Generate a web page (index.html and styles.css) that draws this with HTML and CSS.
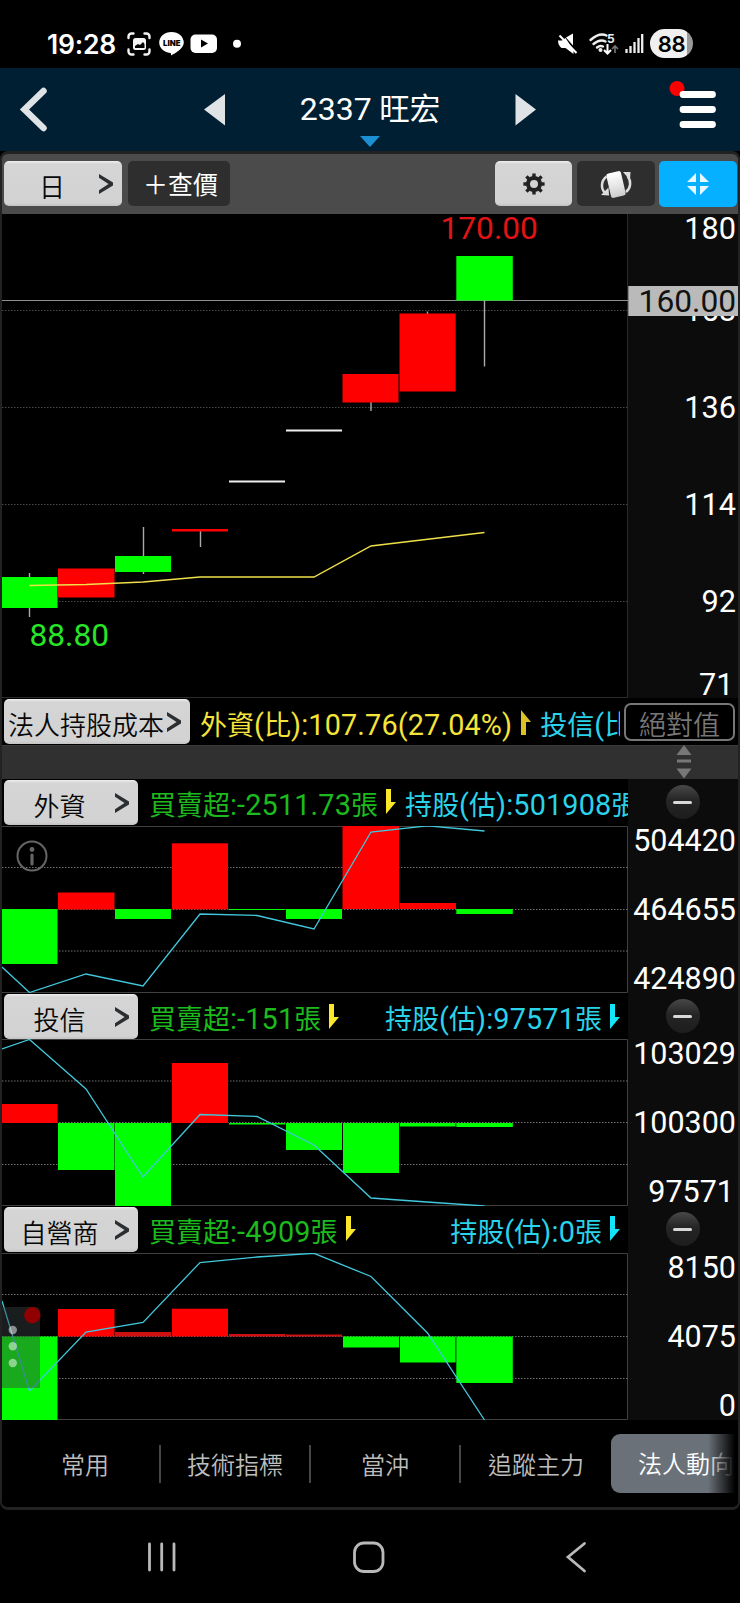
FILE: index.html
```html
<!DOCTYPE html>
<html lang="zh-Hant">
<head>
<meta charset="utf-8">
<title>2337 旺宏</title>
<link rel="stylesheet" href="styles.css">
</head>
<body>
<div class="phone">
  <div class="status">
    <span class="clock">19:28</span>
    <svg class="status-left" width="120" height="28" viewBox="126 30 120 28">
      <g fill="none" stroke="#f4f4f4" stroke-width="2.4" stroke-linecap="round">
        <path d="M128.500 38v-1.500a3 3 0 0 1 3-3h2M144.500 33.500h2a3 3 0 0 1 3 3v1.500M128.500 49.500v2a3 3 0 0 0 3 3h2M144.500 54.500h2a3 3 0 0 0 3-3v-2"/>
      </g>
      <rect x="133" y="38" width="13" height="12" rx="2.500" fill="#f4f4f4"/>
      <path d="M135 48v-2l3-2 2 1 3-3 1.500 2v4z" fill="#000"/>
      <path d="M171.500 32c-7 0-12.300 4.600-12.300 10.600 0 5.400 4.600 9.600 11 10.400 1 .2.900 1 .8 2.400 4-1.800 12.800-6.600 12.800-12.800 0-6-5.300-10.600-12.300-10.600z" fill="#fff"/>
      <text class="line-text" x="163" y="45.600" textLength="17.500" lengthAdjust="spacingAndGlyphs">LINE</text>
      <rect x="190.500" y="34.500" width="26.500" height="18.500" rx="5" fill="#fff"/>
      <path d="M201 39.500v8l7-4z" fill="#000"/>
      <circle cx="237" cy="43.800" r="4" fill="#fff"/>
    </svg>
    <svg class="status-right" width="92" height="30" viewBox="553 29 92 30">
      <path d="M556 40.500h4l3.500-2.500 8 12v4l-8-6h-4q-3.500-3-3.500-7.500zM564 37.500l7-4v12z" fill="#fff"/>
      <path d="M557.500 35.500l17 17.500" stroke="#fff" stroke-width="2"/>
      <g fill="none" stroke="#eee" stroke-width="2.400" stroke-linecap="round">
        <path d="M588.500 40q9-8 16-4.500M591.500 44q6.500-5.500 12-2.500M595 47.500q3-2.500 6-1"/>
      </g>
      <circle cx="598.500" cy="50" r="2" fill="#eee"/>
      <text class="wifi-num" x="605" y="43">5</text>
      <path d="M605.500 44v9M602 50l3.500 3.500 3.500-3.500" fill="none" stroke="#fff" stroke-width="2"/>
      <path d="M613 53v-7M610 49l3-3 3 3" fill="none" stroke="#777" stroke-width="1.600"/>
      <path d="M624.500 53v-4M628.500 53v-7M632.500 53v-11M636.500 53v-15M640.200 53v-19" stroke="#eee" stroke-width="2.300"/>
    </svg>
    <span class="battery">88</span>
  </div>

  <header class="header">
    <svg width="190" height="83" viewBox="0 68 190 83"><path d="M43.500 91L24.500 109.500L43.500 128" fill="none" stroke="#dfe3e6" stroke-width="6.500" stroke-linecap="round"/></svg>
    <svg width="50" height="83" viewBox="190 68 50 83"><path d="M204 109.500L225 94v31.500z" fill="#dfe3e6"/></svg>
    <div class="title"><h1><span class="num">2337</span> 旺宏</h1>
      <svg class="title-mark" width="20" height="11" viewBox="0 0 20 11"><path d="M0 0h20L10 11z" fill="#1b8fd2"/></svg>
    </div>
    <svg width="50" height="83" viewBox="500 68 50 83"><path d="M536 109.500L515.500 94v31.500z" fill="#dfe3e6"/></svg>
    <svg width="190" height="83" viewBox="550 68 190 83"><circle cx="677" cy="88.500" r="7.500" fill="#f00"/><path d="M683 94.500h29.500M683 109.500h29.500M683 124.500h29.500" stroke="#fff" stroke-width="6.800" stroke-linecap="round"/></svg>
  </header>

  <main class="frame">
    <div class="toolbar">
      <button class="btn period"><span>日</span><svg class="chev" width="14" height="20" viewBox="0 0 14 20"><path d="M0 0L14 8.500V11.500L0 20V16.300L9.500 10L0 3.700Z"/></svg></button>
      <button class="btn dark check">＋查價</button>
      <span class="space"></span>
      <button class="btn gear"><svg width="22" height="22" viewBox="-11 -11 22 22"><circle r="6" fill="none" stroke="#222" stroke-width="4"/><path d="M0-7v-3.600M0 7v3.600M7 0h3.600M-7 0h-3.600M5 5l2.600 2.600M-5-5l-2.600-2.600M5-5l2.600-2.600M-5 5l-2.600 2.600" stroke="#222" stroke-width="3.400"/></svg></button>
      <button class="btn dark rotate"><svg width="32" height="30" viewBox="599 168 32 30">
        <defs><linearGradient id="card" x1="0" y1="0" x2="0" y2="1"><stop offset="0" stop-color="#fff"/><stop offset=".5" stop-color="#e8e8e8"/><stop offset="1" stop-color="#ccc"/></linearGradient></defs>
        <rect x="607.500" y="171" width="15" height="25" rx="2.500" transform="rotate(-13 615 183.500)" fill="url(#card)"/>
        <path d="M605.500 175.500C600 180 599.500 187 604 192" fill="none" stroke="#ddd" stroke-width="2.500"/><path d="M600 194l7.500-7.500 .5 8z" fill="#ddd"/>
        <path d="M625 191c5-4 5.500-11 1.500-16" fill="none" stroke="#ddd" stroke-width="2.500"/><path d="M622 171l7.500 0-.5 8z" fill="#ddd"/></svg></button>
      <button class="btn blue"><svg width="22" height="22" viewBox="0 0 22 22"><path d="M9 0v9H0zM13 0v9h9zM9 22v-9H0zM13 22v-9h9z" fill="#e9f7ff"/></svg></button>
    </div>

    <section class="price">
      <svg width="736" height="484" viewBox="2 214 736 484">
        <rect x="628" y="214" width="110" height="484" fill="#0c0c0c"/>
        <path class="axis" d="M627.500 214v484M2 697.500h626"/>
        <path class="grid faint" d="M2 310.500h626M2 407.500h626M2 504.500h626M2 601.500h626"/>
        <path d="M2 300.500h626" stroke="#8f8f8f"/>
        <path class="wick" d="M29.500 573v44M143.500 527v47M200.500 530v17M371 402v9M427.500 311.500v4M484.500 300v66.500"/>
        <g class="up"><rect x="58" y="568.500" width="56.500" height="29"/><rect x="172" y="529" width="56" height="2.500"/><rect x="342.500" y="374" width="56" height="28.500"/><rect x="399.500" y="313.500" width="56.200" height="78"/></g>
        <g class="down"><rect x="2" y="577" width="55.500" height="31"/><rect x="115" y="556" width="56" height="16"/><rect x="456.300" y="256" width="56.500" height="44.500"/></g>
        <path d="M229 481.500h56M286 430.500h56" stroke="#eee" stroke-width="2"/>
        <path d="M29.500 585.500L86 584.500L143 582L200 577H314L371 546L484.500 532.500" fill="none" stroke="#efe04a" stroke-width="1.400"/>
        <text class="high" x="440.500" y="239">170.00</text>
        <text class="low" x="29.500" y="645.500">88.80</text>
        <g class="scale">
          <text x="736" y="239">180</text><text x="736" y="321">158</text><text x="736" y="418">136</text><text x="736" y="515">114</text><text x="736" y="612">92</text><text x="733.500" y="695">71</text>
        </g>
        <rect x="628.300" y="286" width="110" height="30" fill="#bababa"/>
        <text class="now" x="736" y="311.500">160.00</text>
      </svg>
    </section>

    <div class="cost">
      <button class="btn long"><span>法人持股成本</span><svg class="chev" width="14" height="20" viewBox="0 0 14 20"><path d="M0 0L14 8.500V11.500L0 20V16.300L9.500 10L0 3.700Z"/></svg></button>
      <div class="cost-text"><span class="yellow"><i>外資</i>(<i>比</i>):107.76(27.04%)</span><svg class="arrow" width="10" height="25" viewBox="0 0 10 25"><path d="M0 0L10 12H5V25H0Z" fill="#dcc126"/></svg><span class="cyan"><i>投信</i>(<i>比</i>)</span></div>
      <button class="absolute-btn">絕對值</button>
    </div>
    <div class="divider"><svg width="16" height="34" viewBox="0 0 16 34"><path d="M.5 10L8 0l7.500 10zM.5 23.500L8 33.500l7.500-10zM1 14.500h14v3H1z" fill="#777"/></svg></div>

    <section class="panel">
      <div class="panel-main">
        <div class="panel-head">
          <button class="btn"><span>外資</span><svg class="chev" width="14" height="20" viewBox="0 0 14 20"><path d="M0 0L14 8.500V11.500L0 20V16.300L9.500 10L0 3.700Z"/></svg></button>
          <div class="green"><i>買賣超</i>:-2511.73<i>張</i></div>
          <svg class="arrow" width="10" height="25" viewBox="0 0 10 25"><path d="M0 0H5V13H10L0 25Z" fill="#fbe82a"/></svg>
          <div class="cyan cut"><i>持股</i>(<i>估</i>):501908<i>張</i></div>
        </div>
        <svg class="plot" width="626" height="167" viewBox="2 826 626 167">
          <path class="axis" d="M2 826.500H627.500V992.500H2"/>
          <path class="grid" d="M2 867.500h626M2 909.500h626M2 951h626"/>
          <g class="up"><rect x="58" y="892.500" width="56.500" height="17"/><rect x="172" y="843.300" width="56" height="66"/><rect x="342.500" y="826" width="56.500" height="83"/><rect x="400" y="903" width="56" height="6"/></g>
          <g class="down"><rect x="2" y="909" width="55.500" height="55"/><rect x="115" y="909" width="56" height="10"/><rect x="229" y="909" width="56" height="1"/><rect x="286" y="909" width="56" height="10"/><rect x="456.300" y="909" width="56.500" height="5"/></g>
          <path class="trend" d="M2 967L29.500 992.500L86 974L143 986L200 914L257 915.500L314 929L371 832L427.500 825.800L484.500 831"/>
          <g stroke="#666" fill="none" stroke-width="2"><circle cx="32" cy="856" r="14.500"/><path d="M32 855v9" stroke-width="3.200" stroke-linecap="round"/></g><circle cx="32" cy="849.500" r="2.400" fill="#666"/>
        </svg>
      </div>
      <div class="panel-side"><div class="minus"></div><div class="labels"><span>504420</span><span>464655</span><span>424890</span></div></div>
    </section>

    <section class="panel second">
      <div class="panel-main">
        <div class="panel-head">
          <button class="btn"><span>投信</span><svg class="chev" width="14" height="20" viewBox="0 0 14 20"><path d="M0 0L14 8.500V11.500L0 20V16.300L9.500 10L0 3.700Z"/></svg></button>
          <div class="green"><i>買賣超</i>:-151<i>張</i></div>
          <svg class="arrow" width="10" height="25" viewBox="0 0 10 25"><path d="M0 0H5V13H10L0 25Z" fill="#fbe82a"/></svg>
          <div class="cyan end"><i>持股</i>(<i>估</i>):97571<i>張</i></div>
          <svg class="arrow" width="10" height="25" viewBox="0 0 10 25"><path d="M0 0H5V13H10L0 25Z" fill="#14e4fa"/></svg>
        </div>
        <svg class="plot" width="626" height="167" viewBox="2 1039 626 167">
          <path class="axis" d="M2 1039.500H627.500V1205.500H2"/>
          <path class="grid" d="M2 1081h626M2 1122.500h626M2 1164.500h626"/>
          <g class="up"><rect x="2" y="1104" width="55.500" height="19"/><rect x="172" y="1063" width="56" height="60"/></g>
          <g class="down"><rect x="58" y="1123" width="56.500" height="47"/><rect x="115" y="1123" width="56" height="83"/><rect x="229" y="1123" width="56" height="1.500"/><rect x="286" y="1123" width="56" height="27"/><rect x="343" y="1123" width="56" height="50"/><rect x="400" y="1123" width="55.500" height="3.500"/><rect x="456.300" y="1123" width="56.500" height="4"/></g>
          <path class="trend" d="M2 1049L29.500 1039.500L86 1089L143 1177L200 1114.500L257 1116.500L314 1145L371 1198L427 1202L484.500 1206"/>
        </svg>
      </div>
      <div class="panel-side"><div class="minus"></div><div class="labels"><span>103029</span><span>100300</span><span class="tail-one">97571</span></div></div>
    </section>

    <section class="panel">
      <div class="panel-main">
        <div class="panel-head">
          <button class="btn"><span>自營商</span><svg class="chev" width="14" height="20" viewBox="0 0 14 20"><path d="M0 0L14 8.500V11.500L0 20V16.300L9.500 10L0 3.700Z"/></svg></button>
          <div class="green"><i>買賣超</i>:-4909<i>張</i></div>
          <svg class="arrow" width="10" height="25" viewBox="0 0 10 25"><path d="M0 0H5V13H10L0 25Z" fill="#fbe82a"/></svg>
          <div class="cyan end"><i>持股</i>(<i>估</i>):0<i>張</i></div>
          <svg class="arrow" width="10" height="25" viewBox="0 0 10 25"><path d="M0 0H5V13H10L0 25Z" fill="#14e4fa"/></svg>
        </div>
        <svg class="plot" width="626" height="167" viewBox="2 1253 626 167">
          <path class="axis" d="M2 1253.500H627.500V1419.500H2"/>
          <path class="grid" d="M2 1294.500h626M2 1336.500h626M2 1378.500h626"/>
          <g class="up"><rect x="58" y="1309" width="56.500" height="27.500"/><rect x="172" y="1308.700" width="56" height="27.800"/></g>
          <g fill="#cf1010"><rect x="115" y="1332" width="56" height="4.500"/><rect x="229" y="1334" width="56" height="2.500"/><rect x="286" y="1334.500" width="56" height="2"/></g>
          <g class="down"><rect x="2" y="1336.500" width="55.500" height="83.500"/><rect x="343" y="1336.500" width="56" height="11"/><rect x="400" y="1336.500" width="55.500" height="26"/><rect x="456.300" y="1336.500" width="56.500" height="46.500"/></g>
          <path class="trend" d="M2 1301L29.500 1391L86 1332L143 1322.500L200 1262.500L257 1257L314 1253.300L371 1276.500L427.500 1333L484.500 1420"/>
          <path d="M2 1307h33q5 0 5 5v76H2z" fill="#384040" opacity=".45"/>
          <circle cx="32.300" cy="1315.300" r="8.200" fill="#910000"/>
          <g fill="#fff" opacity=".5"><circle cx="12.800" cy="1330" r="4.200"/><circle cx="12.800" cy="1346.300" r="4.200"/><circle cx="12.800" cy="1363" r="4.200"/></g>
        </svg>
      </div>
      <div class="panel-side"><div class="minus"></div><div class="labels"><span>8150</span><span>4075</span><span>0</span></div></div>
    </section>

    <nav class="tabs"><span>常用</span><span>技術指標</span><span>當沖</span><span>追蹤主力</span><span class="active">法人動向</span></nav>
  </main>

  <footer class="nav">
    <svg width="740" height="93" viewBox="0 1510 740 93"><g fill="none" stroke="#b9b9b9" stroke-width="2.800" stroke-linecap="round"><path d="M149.500 1544v26M161.700 1544v26M174 1544v26"/><rect x="354.500" y="1543" width="28.500" height="28.500" rx="9.500"/><path d="M584.500 1543.500L568 1557L584.500 1571"/></g></svg>
  </footer>
</div>
</body>
</html>
```

FILE: styles.css
```css
* { box-sizing: border-box; }
body { margin: 0; background: #000; font-family: Roboto, "Noto Sans CJK TC", sans-serif; color: #fff; }
svg { display: block; flex: none; }
i { font-style: normal; font-size: 27px; letter-spacing: 0; }
button { font-family: inherit; margin: 0; padding: 0; }
.phone { width: 740px; height: 1603px; overflow: hidden; display: flex; flex-direction: column; }

.status { height: 68px; flex: none; display: flex; align-items: center; padding: 20px 47px 0 47px; }
.clock { font: 600 26.5px/30px Inter, sans-serif; letter-spacing: -0.2px; width: 79px; white-space: nowrap; }
.status-right { margin: 0 3px 0 auto; }
.line-text { font: 900 8px Inter, sans-serif; }
.wifi-num { font: 700 12px Inter, sans-serif; fill: #eee; }
.battery { width: 43px; height: 29px; margin-top: -1px; border-radius: 15px; background: linear-gradient(90deg, #f0f0f0 37px, #999 37px); color: #000; font: 600 22px/30px Inter, sans-serif; text-align: center; letter-spacing: -0.3px; }

.header { height: 83px; flex: none; display: flex; background: #001f33; }
.title { width: 260px; display: flex; flex-direction: column; align-items: center; position: relative; }
.title h1 { margin: 0; font-size: 30.5px; font-weight: 400; line-height: 83px; white-space: nowrap; }
.title .num { font-size: 32px; }
.title-mark { position: absolute; bottom: 4px; left: 120px; }

.frame { width: 740px; height: 1359px; flex: none; border: solid #222; border-width: 3px 2px; border-radius: 8px; display: flex; flex-direction: column; overflow: hidden; }
.toolbar { height: 60px; flex: none; background: #4b4b4b; display: flex; align-items: flex-start; padding: 7px 1px 0 2px; }
.space { flex: 1; }
.btn { height: 45px; border: 0; border-radius: 5px; background: linear-gradient(#efefef, #d5d5d5 3px, #d2d2d2 42px, #c2c2c2); color: #080808; font-size: 26px; font-weight: 350; display: flex; align-items: center; justify-content: center; flex: none; }
.btn span { padding-top: 8px; line-height: 36px; white-space: nowrap; }
.chev { fill: #2c2f31; }
.period { width: 118px; justify-content: flex-end; padding-right: 9px; gap: 34px; }
.dark { background: #2e2e2e; color: #fff; font-weight: 400; }
.check { width: 102px; margin-left: 6px; padding: 0 0 1px 3px; font-size: 25px; }
.gear { width: 77px; }
.rotate { width: 78px; margin: 0 4px 0 5px; }
.blue { width: 78px; height: 46px; background: #04b0ff; }

.price { height: 484px; flex: none; }
.axis { fill: none; stroke: #404040; }
.price .axis { stroke: #2a2a2a; }
.grid { fill: none; stroke: #707070; stroke-dasharray: 1.5 1.5; }
.faint { stroke: #484848; }
.wick { stroke: #aaa; stroke-width: 1.4; }
.up { fill: #f00; }
.down { fill: #0f0; }
.trend { fill: none; stroke: #41c8dc; stroke-width: 1.3; }
.price text { font-size: 31.7px; }
.price .high { fill: #e01414; }
.price .low { fill: #26e626; }
.price .scale text, .price .now { text-anchor: end; font-size: 30.7px; fill: #fff; }
.price .now { fill: #111; font-size: 31.7px; }

.cost { height: 47px; flex: none; display: flex; padding: 1px 3px 0 2px; background: #000; }
.long { width: 186px; justify-content: flex-start; padding-left: 4px; gap: 3px; }
.cost-text { width: 430px; padding-left: 10px; display: flex; overflow: hidden; white-space: nowrap; font-size: 28.8px; letter-spacing: .15px; line-height: 52px; }
.cost-text .arrow { margin: 11px 9px 0; }
.yellow { color: #f5e43a; }
.cyan { color: #2bd3ea; }
.green { color: #1dba1d; }
.absolute-btn { width: 111px; height: 38px; margin: 4px 0 0 4px; flex: none; border: 2px solid #777; border-radius: 7px; background: #000; color: #777; font-size: 27px; line-height: 34px; padding-top: 4px; font-weight: 350; }
.divider { height: 34px; flex: none; background: #303030; border-top: 1px solid #3b3b3b; padding-left: 673.5px; }
.divider svg { margin-top: -1px; }

.panel { height: 214px; flex: none; display: flex; }
.second { height: 213px; }
.panel-main { width: 626px; display: flex; flex-direction: column; overflow: hidden; }
.panel-head { flex: 1; display: flex; padding: 1px 0 0 2px; font-size: 28.8px; letter-spacing: .15px; line-height: 51px; white-space: nowrap; min-height: 0; }
.panel-head > div { height: 46px; }
.panel-head .btn { width: 134px; margin-right: 11px; justify-content: flex-start; letter-spacing: 0; }
.panel-head .btn span { width: 111px; text-align: center; }
.panel-head .arrow { margin: 9px 5px 0 8px; }
.second .arrow { margin-top: 10px; }
.panel-head .cyan + .arrow { margin-right: 8px; }
.cut { margin-left: 4px; }
.end { margin-left: auto; }
.panel-side { width: 110px; background: #0c0c0c; display: flex; flex-direction: column; }
.minus { flex: none; width: 34px; height: 34px; margin: 6px 0 7px 37.5px; border-radius: 50%; background: linear-gradient(#484848, #252525 45%, #1d1d1d); display: flex; align-items: center; justify-content: center; }
.second .minus { margin-bottom: 6px; }
.minus::before { content: ""; width: 19px; height: 3px; border-radius: 2px; background: #d8d8d8; }
.labels { height: 167px; display: flex; flex-direction: column; justify-content: space-between; font-size: 30.5px; line-height: 29px; text-align: right; padding-right: 2px; }
.tail-one { padding-right: 2px; }

.tabs { height: 87px; flex: none; display: flex; align-items: center; justify-content: flex-start; position: relative; padding-left: 9px; overflow: hidden; background: #000; }
.tabs span { width: 150px; flex: none; height: 38px; line-height: 42px; font-size: 24px; font-weight: 350; color: #bdbdbd; text-align: center; border-right: 2px solid #474747; white-space: nowrap; }
.tabs span:nth-child(4) { border: 0; }
.tabs .active { width: 150px; height: 59px; line-height: 63px; background: #6b7178; color: #fff; border: 0; border-radius: 9px; text-align: left; padding-left: 27px; }
.tabs::after { content: ""; position: absolute; right: 0; top: 0; width: 30px; height: 87px; background: linear-gradient(90deg, transparent, #000 90%); }
.nav { height: 93px; flex: none; }
```
